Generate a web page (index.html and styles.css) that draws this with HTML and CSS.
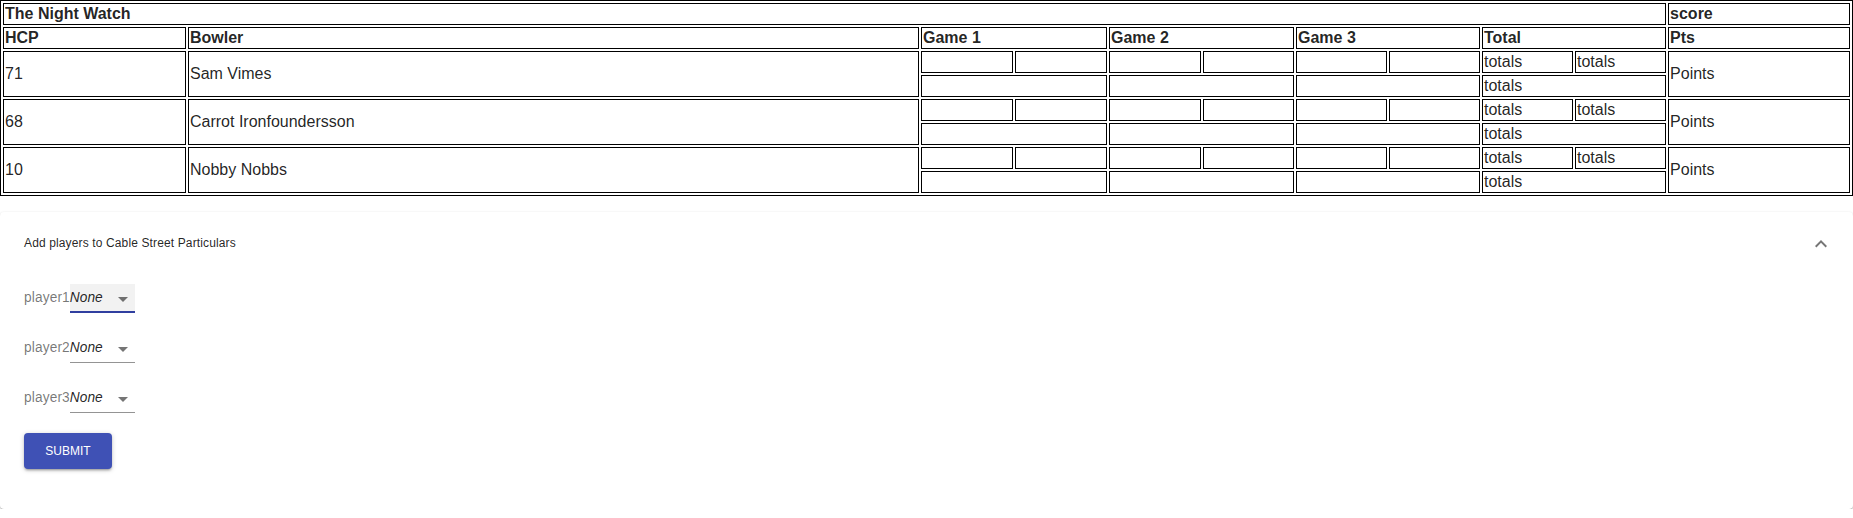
FILE: index.html
```html
<!DOCTYPE html>
<html>
<head>
<meta charset="utf-8">
<title>The Night Watch</title>
<link rel="stylesheet" href="styles.css">
</head>
<body>
<table class="score-table">
  <colgroup>
    <col class="c-hcp"><col class="c-bowler">
    <col class="c-g"><col class="c-g"><col class="c-g"><col class="c-g91"><col class="c-g91"><col class="c-g91">
    <col class="c-g91"><col class="c-g91">
    <col class="c-pts">
  </colgroup>
  <tr><th colspan="10">The Night Watch</th><th>score</th></tr>
  <tr><th>HCP</th><th>Bowler</th><th colspan="2">Game 1</th><th colspan="2">Game 2</th><th colspan="2">Game 3</th><th colspan="2">Total</th><th>Pts</th></tr>
  <tr><td rowspan="2">71</td><td rowspan="2">Sam Vimes</td><td></td><td></td><td></td><td></td><td></td><td></td><td>totals</td><td>totals</td><td rowspan="2">Points</td></tr>
  <tr><td colspan="2"></td><td colspan="2"></td><td colspan="2"></td><td colspan="2">totals</td></tr>
  <tr><td rowspan="2">68</td><td rowspan="2">Carrot Ironfoundersson</td><td></td><td></td><td></td><td></td><td></td><td></td><td>totals</td><td>totals</td><td rowspan="2">Points</td></tr>
  <tr><td colspan="2"></td><td colspan="2"></td><td colspan="2"></td><td colspan="2">totals</td></tr>
  <tr><td rowspan="2">10</td><td rowspan="2">Nobby Nobbs</td><td></td><td></td><td></td><td></td><td></td><td></td><td>totals</td><td>totals</td><td rowspan="2">Points</td></tr>
  <tr><td colspan="2"></td><td colspan="2"></td><td colspan="2"></td><td colspan="2">totals</td></tr>
</table>

<section class="panel">
  <div class="panel-summary">
    <div class="summary-text">Add players to Cable Street Particulars</div>
    <span class="expand-btn">
      <svg viewBox="0 0 24 24" width="24" height="24"><path d="M12 8l-6 6 1.41 1.41L12 10.83l4.59 4.58L18 14z"/></svg>
    </span>
  </div>
  <div class="panel-details">
    <form class="player-form">
      <div class="player-row">
        <label class="player-label">player1</label>
        <div class="select focused"><span class="select-value"><em>None</em></span><svg class="select-arrow" viewBox="0 0 24 24" width="24" height="24"><path d="M7 10l5 5 5-5z"/></svg></div>
      </div>
      <div class="player-row">
        <label class="player-label">player2</label>
        <div class="select"><span class="select-value"><em>None</em></span><svg class="select-arrow" viewBox="0 0 24 24" width="24" height="24"><path d="M7 10l5 5 5-5z"/></svg></div>
      </div>
      <div class="player-row">
        <label class="player-label">player3</label>
        <div class="select"><span class="select-value"><em>None</em></span><svg class="select-arrow" viewBox="0 0 24 24" width="24" height="24"><path d="M7 10l5 5 5-5z"/></svg></div>
      </div>
      <button type="button" class="submit-btn">Submit</button>
    </form>
  </div>
</section>
</body>
</html>
```

FILE: styles.css
```css
html, body {
  margin: 0;
  padding: 0;
  background: #fff;
}

body {
  font-family: "Liberation Sans", Arial, sans-serif;
  color: rgba(0, 0, 0, 0.87);
}

.score-table {
  width: 100%;
  table-layout: fixed;
  border: 1px solid #000;
  border-spacing: 2px;
  font-size: 16px;
  line-height: 18px;
}

.c-hcp { width: 183px; }
.c-bowler { width: 731px; }
.c-g { width: 92px; }
.c-g91 { width: 91px; }
.c-pts { width: 182px; }

.score-table th,
.score-table td {
  border: 1px solid #000;
  padding: 1px;
  text-align: left;
  vertical-align: middle;
  white-space: nowrap;
  overflow: hidden;
}

.score-table th {
  font-weight: bold;
}

/* Expansion panel */
.panel {
  margin: 16px 0 0;
  background: #fff;
  border-radius: 4px;
  box-shadow: 0px 1px 3px 0px rgba(0, 0, 0, 0.2),
              0px 1px 1px 0px rgba(0, 0, 0, 0.14),
              0px 2px 1px -1px rgba(0, 0, 0, 0.12);
  font-family: "Liberation Sans", Arial, sans-serif;
}

.panel-summary {
  display: flex;
  align-items: center;
  min-height: 64px;
  padding: 0 8px 0 24px;
}

.summary-text {
  flex: 1;
  font-size: 12px;
  line-height: 1.46429em;
  letter-spacing: 0.13px;
  color: rgba(0, 0, 0, 0.87);
}

.expand-btn {
  width: 48px;
  height: 48px;
  display: flex;
  align-items: center;
  justify-content: center;
}

.expand-btn svg {
  fill: rgba(0, 0, 0, 0.54);
}

.panel-details {
  padding: 8px 24px 40px;
}

.player-form {
  display: flex;
  flex-direction: column;
  align-items: flex-start;
}

.player-row {
  display: flex;
  align-items: baseline;
}

.player-row + .player-row {
  margin-top: 20.72px;
}

.player-label {
  font-size: 13.71px;
  line-height: 1;
  letter-spacing: 0.13px;
  color: rgba(0, 0, 0, 0.54);
}

.select {
  position: relative;
  display: inline-flex;
  font-size: 13.71px;
  color: rgba(0, 0, 0, 0.87);
}

.select-value {
  display: block;
  padding: 6px 32px 7px 0;
  line-height: 16.28px;
}

.select.focused .select-value {
  background: rgba(0, 0, 0, 0.05);
}

.select::before {
  content: "";
  position: absolute;
  left: 0;
  right: 0;
  bottom: 0;
  border-bottom: 1px solid rgba(0, 0, 0, 0.42);
}

.select.focused::after {
  content: "";
  position: absolute;
  left: 0;
  right: 0;
  bottom: 0;
  border-bottom: 2px solid #303f9f;
}

.select-arrow {
  position: absolute;
  right: 0;
  top: calc(50% - 12px);
  fill: rgba(0, 0, 0, 0.54);
  pointer-events: none;
}

.submit-btn {
  margin-top: 20.16px;
  min-width: 88px;
  height: 36px;
  padding: 8px 16px;
  border: 0;
  border-radius: 4px;
  background: #3f51b5;
  color: #fff;
  font-family: "Liberation Sans", Arial, sans-serif;
  font-weight: 500;
  font-size: 12px;
  line-height: 1.4;
  text-transform: uppercase;
  box-shadow: 0px 1px 5px 0px rgba(0, 0, 0, 0.2),
              0px 2px 2px 0px rgba(0, 0, 0, 0.14),
              0px 3px 1px -2px rgba(0, 0, 0, 0.12);
  cursor: pointer;
}
```
